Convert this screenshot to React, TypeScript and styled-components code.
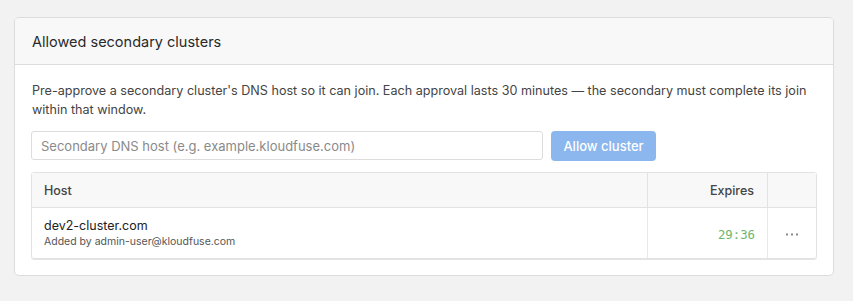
import React from "react";
import styled, { createGlobalStyle } from "styled-components";

const Global = createGlobalStyle`
  html, body { margin: 0; padding: 0; background: #f2f2f2; }
  body { font-family: "Inter", "Liberation Sans", sans-serif; color: #333; }
  * { box-sizing: border-box; }
`;

const Page = styled.div`
  padding: 17px 20px 24px 14px;
`;

const Card = styled.section`
  width: 820px;
  background: #fff;
  border: 1px solid #dcdcdc;
  border-radius: 5px;
  overflow: hidden;
`;

const CardHeader = styled.header`
  height: 47px;
  display: flex;
  align-items: center;
  padding: 0 17px;
  background: #f8f8f8;
  border-bottom: 1px solid #dcdcdc;
  font-size: 14.5px;
  font-weight: 400;
  color: #2a2a2a;
`;

const CardBody = styled.div`
  padding: 16px;
  display: flex;
  flex-direction: column;
`;

const Description = styled.p`
  margin: 0 0 0 1px;
  font-size: 12.6px;
  line-height: 19px;
  color: #444;
`;

const FormRow = styled.div`
  display: flex;
  gap: 8px;
  margin-top: 12px;
`;

const Input = styled.input`
  width: 512px;
  height: 29px;
  padding: 0 9px;
  border: 1px solid #dcdcdc;
  border-radius: 3px;
  font-family: inherit;
  font-size: 13px;
  color: #333;
  outline: none;
  &::placeholder { color: #8a8a8a; }
`;

const Button = styled.button`
  width: 105px;
  height: 30px;
  border: none;
  border-radius: 4px;
  background: #8bb6ee;
  color: #fff;
  font-family: inherit;
  font-size: 13px;
  font-weight: 500;
`;

const Table = styled.div`
  margin-top: 11px;
  border: 1px solid #e2e2e2;
  border-radius: 3px;
  box-shadow: 0 1px 0 #e4e4e4;
  display: grid;
  grid-template-columns: 1fr 120px 48px;
  width: 786px;
`;

const HeadCell = styled.div<{ $align?: string; $last?: boolean }>`
  height: 35px;
  display: flex;
  align-items: center;
  justify-content: ${(p) => p.$align || "flex-start"};
  padding: 0 13px 0 12px;
  background: #f8f8f8;
  border-bottom: 1px solid #e2e2e2;
  border-right: ${(p) => (p.$last ? "none" : "1px solid #e2e2e2")};
  font-size: 12.5px;
  font-weight: 500;
  color: #444;
`;

const Cell = styled.div<{ $align?: string; $last?: boolean }>`
  height: 50px;
  display: flex;
  flex-direction: column;
  justify-content: center;
  align-items: ${(p) => p.$align || "flex-start"};
  padding: 0 13px 0 12px;
  border-right: ${(p) => (p.$last ? "none" : "1px solid #e8e8e8")};
`;

const HostName = styled.div`
  font-size: 12.5px;
  color: #222;
  line-height: 17px;
`;

const HostMeta = styled.div`
  font-size: 10.5px;
  color: #555;
  line-height: 16px;
`;

const Timer = styled.span`
  font-family: "DejaVu Sans Mono", "Liberation Mono", monospace;
  font-size: 12.3px;
  color: #6cb66c;
  margin-top: 4px;
  margin-right: -1px;
`;

const MoreIcon = styled.svg`
  align-self: center;
  margin-top: 2px;
`;

export default function App() {
  return (
    <>
      <Global />
      <Page>
        <Card>
          <CardHeader>Allowed secondary clusters</CardHeader>
          <CardBody>
            <Description>
              Pre-approve a secondary cluster's DNS host so it can join. Each approval lasts 30 minutes — the
              secondary must complete its join within that window.
            </Description>
            <FormRow>
              <Input placeholder="Secondary DNS host (e.g. example.kloudfuse.com)" />
              <Button disabled>Allow cluster</Button>
            </FormRow>
            <Table>
              <HeadCell>Host</HeadCell>
              <HeadCell $align="flex-end">Expires</HeadCell>
              <HeadCell $last />
              <Cell>
                <HostName>dev2-cluster.com</HostName>
                <HostMeta>Added by admin-user@kloudfuse.com</HostMeta>
              </Cell>
              <Cell $align="flex-end">
                <Timer>29:36</Timer>
              </Cell>
              <Cell $last>
                <MoreIcon width="12" height="3" viewBox="0 0 12 3">
                  <rect x="0" y="0.5" width="2" height="2" fill="#8a8a8a" />
                  <rect x="5" y="0.5" width="2" height="2" fill="#8a8a8a" />
                  <rect x="10" y="0.5" width="2" height="2" fill="#8a8a8a" />
                </MoreIcon>
              </Cell>
            </Table>
          </CardBody>
        </Card>
      </Page>
    </>
  );
}
